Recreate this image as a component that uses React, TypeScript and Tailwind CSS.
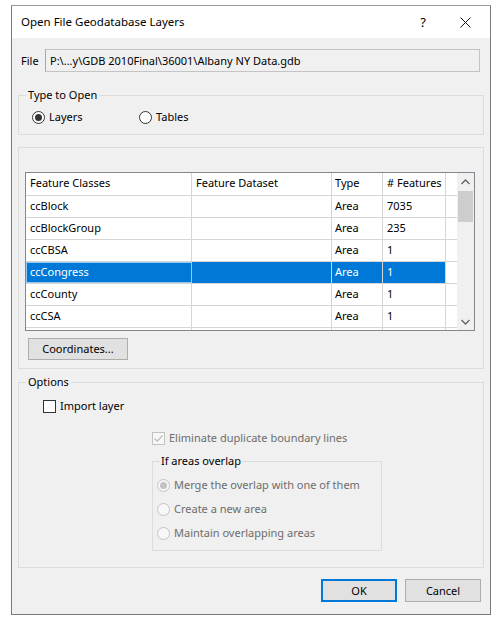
import React from 'react';

const font = { fontFamily: '"Noto Sans", "Open Sans", Arial, sans-serif' };

type Row = { name: string; dataset: string; type: string; count: string };

const rows: Row[] = [
  { name: 'ccBlock', dataset: '', type: 'Area', count: '7035' },
  { name: 'ccBlockGroup', dataset: '', type: 'Area', count: '235' },
  { name: 'ccCBSA', dataset: '', type: 'Area', count: '1' },
  { name: 'ccCongress', dataset: '', type: 'Area', count: '1' },
  { name: 'ccCounty', dataset: '', type: 'Area', count: '1' },
  { name: 'ccCSA', dataset: '', type: 'Area', count: '1' },
  { name: '', dataset: '', type: '', count: '' },
];

const Radio: React.FC<{ checked?: boolean; disabled?: boolean; label: string }> = ({ checked, disabled, label }) => (
  <div className="flex items-center h-4">
    <span
      className={`w-[13px] h-[13px] rounded-full border flex items-center justify-center ${
        disabled ? 'border-[#c2c2c2] bg-[#f7f7f7]' : 'border-[#333333] bg-white'
      }`}
    >
      {checked && <span className={`w-[7px] h-[7px] rounded-full ${disabled ? 'bg-[#c2c2c2]' : 'bg-[#333333]'}`} />}
    </span>
    <span className={`ml-[4px] ${disabled ? 'text-[#6d6d6d]' : 'text-black'}`}>{label}</span>
  </div>
);

const Checkbox: React.FC<{ checked?: boolean; disabled?: boolean; label: string }> = ({ checked, disabled, label }) => (
  <div className="flex items-center h-4">
    <span
      className={`w-[13px] h-[13px] border flex items-center justify-center ${
        disabled ? 'border-[#c2c2c2] bg-[#f7f7f7]' : 'border-[#333333] bg-white'
      }`}
    >
      {checked && (
        <svg width="11" height="11" viewBox="0 0 11 11">
          <polyline points="1.5,5.5 4.2,8.2 9.5,2.5" fill="none" stroke={disabled ? '#bcbcbc' : '#333'} strokeWidth="1.2" />
        </svg>
      )}
    </span>
    <span className={`ml-[4px] ${disabled ? 'text-[#6d6d6d]' : 'text-black'}`}>{label}</span>
  </div>
);

const cols = 'grid grid-cols-[166px_140px_51px_63px_11px]';

export default function App() {
  return (
    <div className="w-[495px] h-[621px] bg-white pt-[5px] pl-[11px] text-[11px] leading-4 text-black" style={font}>
      <div className="w-[480px] h-[610px] border border-[#7a7a7a] border-t-[#9a9a9a] flex flex-col">
        {/* title bar */}
        <div className="h-[32px] bg-white flex items-center pl-[9px] shrink-0">
          <span className="text-[11.5px]">Open File Geodatabase Layers</span>
          <span className="ml-auto mr-[34px] text-[13px]">?</span>
          <svg width="11" height="11" viewBox="0 0 11 11" className="mr-[19px]">
            <path d="M0.5 0.5 L10.5 10.5 M10.5 0.5 L0.5 10.5" stroke="#111" strokeWidth="1" />
          </svg>
        </div>

        <div className="flex-1 bg-[#f0f0f0] flex flex-col">
          {/* file row */}
          <div className="mt-[11px] flex items-center pl-[9px] h-[23px]">
            <span className="w-[24px]">File</span>
            <div className="w-[435px] h-[23px] border border-[#c4c4c4] border-l-[#a8a8a8] bg-[#f0f0f0] flex items-center pl-[4px]">
              P:\...y\GDB 2010Final\36001\Albany NY Data.gdb
            </div>
          </div>

          {/* type to open */}
          <fieldset className="mt-[15px] ml-[6px] w-[466px] border border-[#dcdcdc] pb-[9px]">
            <legend className="ml-[7px] px-[2px] h-4 leading-4">Type to Open</legend>
            <div className="mt-[6px] flex pl-[13px]">
              <div className="w-[107px]">
                <Radio checked label="Layers" />
              </div>
              <Radio label="Tables" />
            </div>
          </fieldset>

          {/* list box */}
          <div className="mt-[12px] ml-[6px] w-[466px] border border-[#dcdcdc] pt-[24px] pl-[6px] pb-[8px]">
            <div className="w-[450px] h-[159px] border border-[#828790] bg-white flex overflow-hidden">
              <div className="w-[431px] overflow-hidden">
                <div className={`${cols} h-[23px] border-b border-[#d5d5d5]`}>
                  {['Feature Classes', 'Feature Dataset', 'Type', '# Features'].map((h, i) => (
                    <div key={h} className={`border-r border-[#d5d5d5] flex items-center pb-[2px] ${i === 2 ? 'pl-[3px]' : 'pl-[4px]'}`}>
                      {h}
                    </div>
                  ))}
                  <div />
                </div>
                {rows.map((r, idx) => {
                  const sel = r.name === 'ccCongress';
                  return (
                    <div key={idx} className={`${cols} h-[22px] border-b border-[#d5d5d5]`}>
                      <div
                        className={`border-r border-[#d5d5d5] flex items-center pl-[4px] pb-[2px] ${
                          sel ? 'bg-[#0078d7] text-white outline outline-1 -outline-offset-1 outline-[#99c9ef]' : ''
                        }`}
                      >
                        {r.name}
                      </div>
                      <div className={`border-r border-[#d5d5d5] ${sel ? 'bg-[#0078d7]' : ''}`}>{r.dataset}</div>
                      <div className={`border-r border-[#d5d5d5] flex items-center pl-[3px] pb-[2px] ${sel ? 'bg-[#0078d7] text-white' : ''}`}>
                        {r.type}
                      </div>
                      <div className={`border-r border-[#d5d5d5] flex items-center pl-[4px] pb-[2px] ${sel ? 'bg-[#0078d7] text-white' : ''}`}>
                        {r.count}
                      </div>
                      <div />
                    </div>
                  );
                })}
              </div>
              {/* scrollbar */}
              <div className="w-[17px] bg-[#f0f0f0] flex flex-col items-center">
                <div className="h-[17px] flex items-center justify-center">
                  <svg width="9" height="6" viewBox="0 0 9 6">
                    <polyline points="0.5,5 4.5,1 8.5,5" fill="none" stroke="#606060" strokeWidth="1.3" />
                  </svg>
                </div>
                <div className="mt-[1px] w-[15px] h-[31px] bg-[#cdcdcd]" />
                <div className="flex-1" />
                <div className="h-[17px] flex items-center justify-center">
                  <svg width="9" height="6" viewBox="0 0 9 6">
                    <polyline points="0.5,1 4.5,5 8.5,1" fill="none" stroke="#606060" strokeWidth="1.3" />
                  </svg>
                </div>
              </div>
            </div>
            <button className="mt-[7px] ml-[3px] w-[100px] h-[22px] bg-[#e1e1e1] border border-[#adadad] flex items-center justify-center">
              Coordinates...
            </button>
          </div>

          {/* options */}
          <fieldset className="mt-[5px] ml-[6px] w-[466px] border border-[#dcdcdc] pb-[16px]">
            <legend className="ml-[7px] px-[2px] h-4 leading-4">Options</legend>
            <div className="mt-[8px] pl-[24px]">
              <Checkbox label="Import layer" />
            </div>
            <div className="mt-[16px] pl-[133px]">
              <Checkbox checked disabled label="Eliminate duplicate boundary lines" />
            </div>
            <fieldset className="mt-[7px] ml-[133px] w-[230px] border border-[#dcdcdc] pb-[9px]">
              <legend className="ml-[7px] px-[1px] h-4 leading-4">If areas overlap</legend>
              <div className="mt-[8px] pl-[4px] flex flex-col gap-[8px]">
                <Radio checked disabled label="Merge the overlap with one of them" />
                <Radio disabled label="Create a new area" />
                <Radio disabled label="Maintain overlapping areas" />
              </div>
            </fieldset>
          </fieldset>

          {/* buttons */}
          <div className="mt-[11px] flex justify-end gap-[8px] pr-[9px]">
            <button className="w-[76px] h-[23px] bg-[#e1e1e1] border-2 border-[#0078d7] flex items-center justify-center">
              OK
            </button>
            <button className="w-[76px] h-[23px] bg-[#e1e1e1] border border-[#adadad] flex items-center justify-center">
              Cancel
            </button>
          </div>
        </div>
      </div>
    </div>
  );
}
